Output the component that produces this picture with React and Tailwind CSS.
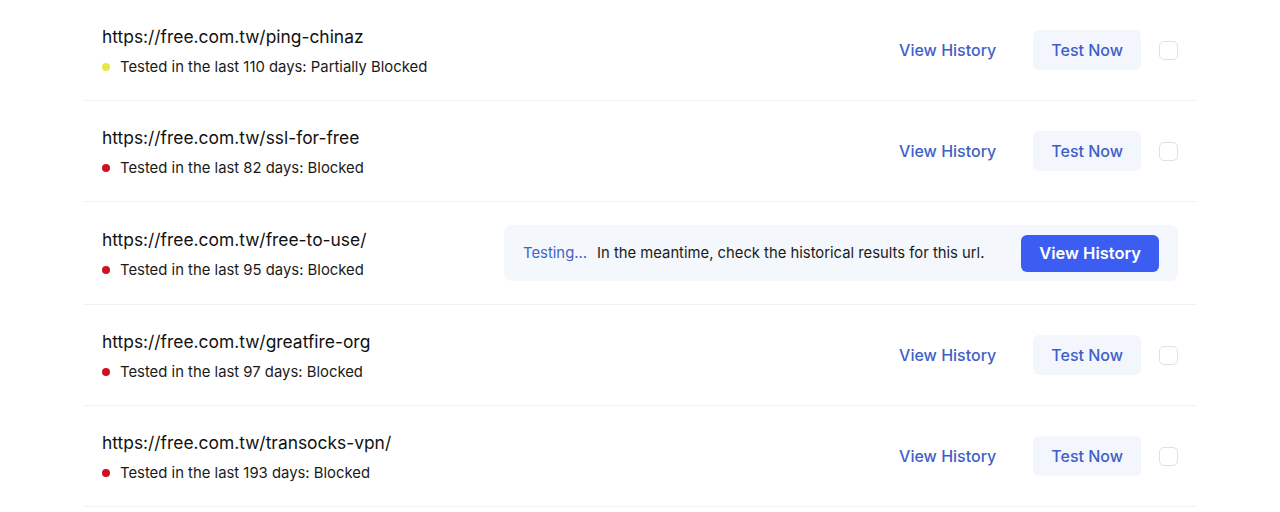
import React from "react";

const rows = [
  { url: "https://free.com.tw/ping-chinaz", days: 110, status: "Partially Blocked", color: "bg-[#e6ea45]" },
  { url: "https://free.com.tw/ssl-for-free", days: 82, status: "Blocked", color: "bg-[#d0101f]" },
  { url: "https://free.com.tw/free-to-use/", days: 95, status: "Blocked", color: "bg-[#d0101f]", testing: true },
  { url: "https://free.com.tw/greatfire-org", days: 97, status: "Blocked", color: "bg-[#d0101f]" },
  { url: "https://free.com.tw/transocks-vpn/", days: 193, status: "Blocked", color: "bg-[#d0101f]" },
];

export default function App() {
  return (
    <div className="min-h-[512px] bg-white" style={{ fontFamily: "Inter, 'Noto Sans', sans-serif" }}>
      <div className="mx-auto w-[1112px]">
        {rows.map((r) => (
          <div key={r.url} className="flex items-center justify-between border-b border-[#f1f2f4] px-[18px] py-[23px]">
            <div className="flex flex-col">
              <div className="text-[17.4px] leading-[28px] text-[#111]">{r.url}</div>
              <div className="mt-[6px] flex items-center text-[14.85px] leading-[20px] text-[#1a1a1a]">
                <span className={`mr-[10px] h-[8px] w-[8px] rounded-full ${r.color}`} />
                Tested in the last {r.days} days: {r.status}
              </div>
            </div>
            {r.testing ? (
              <div className="flex h-[56px] w-[674px] items-center rounded-lg bg-[#f4f7fc] pl-[19px] pr-[19px]">
                <span className="text-[14.85px] text-[#3f63c9]">Testing...</span>
                <span className="ml-[10px] text-[14.8px] text-[#1a1a1a]">In the meantime, check the historical results for this url.</span>
                <button className="ml-auto h-[37px] rounded-md bg-[#3b5df2] px-[18px] text-[16.5px] font-semibold text-white">
                  View History
                </button>
              </div>
            ) : (
              <div className="flex items-center">
                <button className="h-10 rounded-md px-[19px] text-[16px] font-medium text-[#3f5fc8]">View History</button>
                <button className="ml-[18px] h-10 rounded-md bg-[#f3f6fd] px-[18px] text-[16px] font-medium text-[#3f5fc8]">
                  Test Now
                </button>
                <span className="ml-[18px] h-[19px] w-[19px] rounded-[5px] border border-[#dfe1e5] bg-white" />
              </div>
            )}
          </div>
        ))}
      </div>
    </div>
  );
}
